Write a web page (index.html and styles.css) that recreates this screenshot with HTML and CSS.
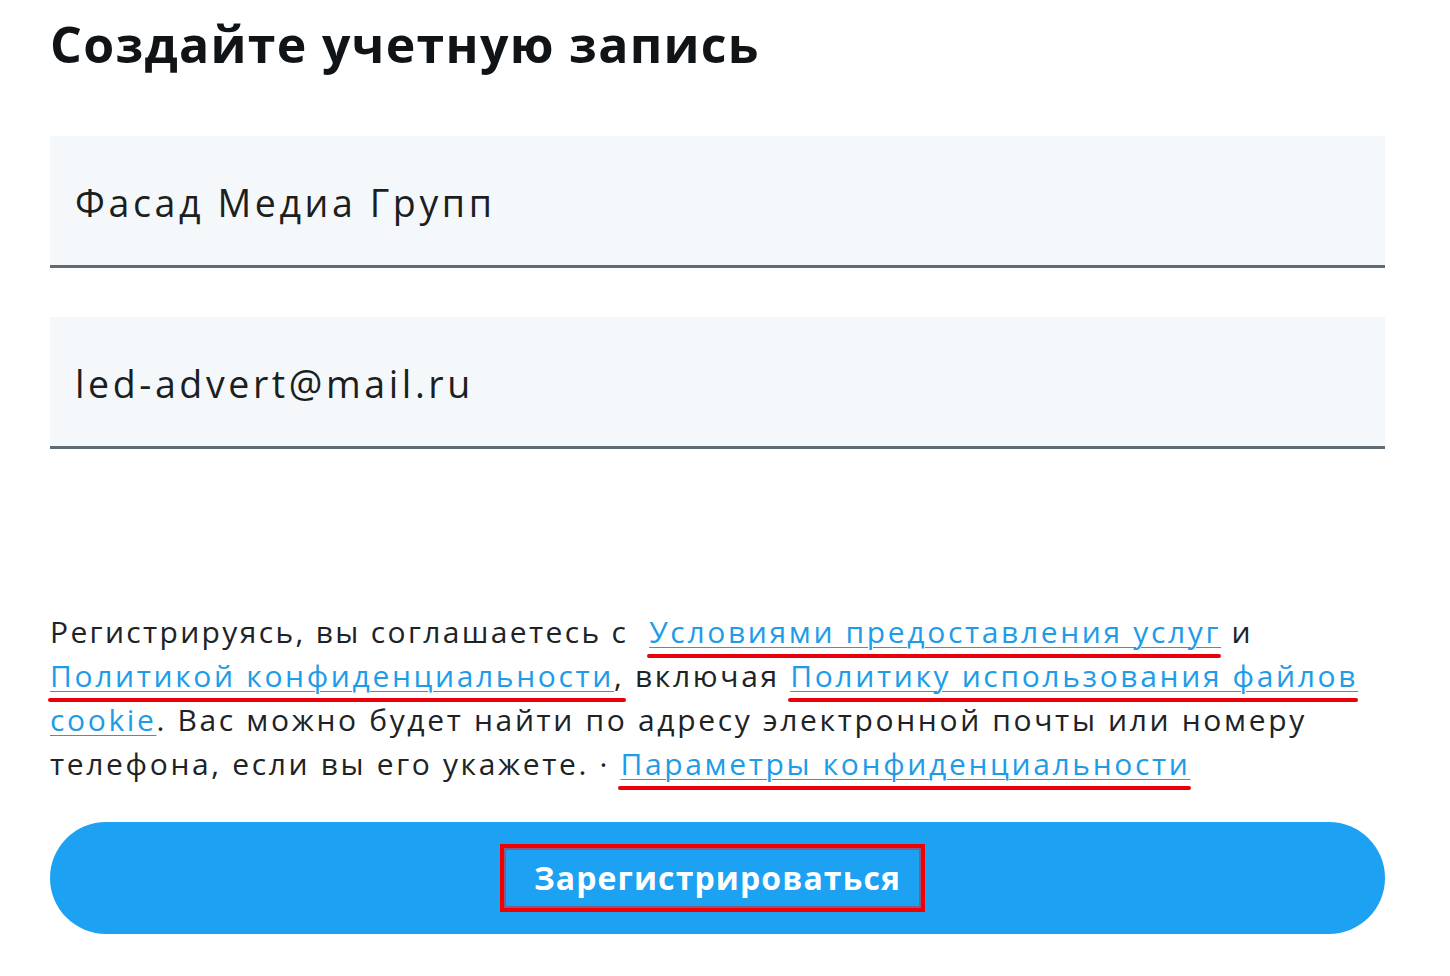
FILE: index.html
```html
<!DOCTYPE html>
<html lang="ru">
<head>
<meta charset="utf-8">
<title>Создайте учетную запись</title>
<link rel="stylesheet" href="styles.css">
</head>
<body>
<main class="signup">
  <h1 class="title">Создайте учетную запись</h1>
  <div class="field"><span class="field-value">Фасад Медиа Групп</span></div>
  <div class="field field-second"><span class="field-value">led-advert@mail.ru</span></div>
  <p class="terms"><span class="lead">Регистрируясь, вы соглашаетесь с</span>&nbsp; <a class="link marked" href="#">Условиями предоставления услуг</a> и<br><a class="link marked marked-wide" href="#">Политикой конфиденциальности</a>, включая <a class="link marked" href="#">Политику использования файлов</a><br><a class="link" href="#">cookie</a>. Вас можно будет найти по адресу электронной почты или номеру<br>телефона, если вы его укажете. · <a class="link marked" href="#">Параметры конфиденциальности</a></p>
  <button class="submit" type="button"><span class="submit-label">Зарегистрироваться</span></button>
</main>
</body>
</html>
```

FILE: styles.css
```css
html, body {
  margin: 0;
  padding: 0;
  background: #ffffff;
}

body {
  font-family: "Open Sans", "Noto Sans", "DejaVu Sans", sans-serif;
  color: #14171a;
}

.signup {
  width: 1335px;
  padding: 0 0 0 50px;
  display: flex;
  flex-direction: column;
}

.title {
  margin: 14px 0 0 0;
  font-size: 50px;
  line-height: 60px;
  font-weight: 700;
  letter-spacing: 1.3px;
  color: #111417;
  white-space: nowrap;
}

.field {
  margin-top: 62px;
  background: #f5f8fa;
  border-bottom: 3px solid #5f6b75;
  padding: 42px 25px 0 25px;
  box-sizing: border-box;
  height: 132px;
}

.field-second {
  margin-top: 49px;
}

.field-value {
  display: block;
  font-size: 37.5px;
  line-height: 50px;
  letter-spacing: 3.6px;
  color: #1c1f22;
  white-space: nowrap;
}

.terms {
  margin: 161px 0 0 0;
  font-size: 30px;
  line-height: 44px;
  letter-spacing: 2.65px;
  color: #202326;
}

.lead {
  letter-spacing: 2.35px;
}

.link {
  color: #1e9ce8;
  text-decoration: underline;
  text-decoration-thickness: 1px;
  text-underline-offset: 4px;
}

.marked {
  position: relative;
}

.marked::after {
  content: "";
  position: absolute;
  left: -2px;
  right: 0;
  bottom: -6px;
  height: 4px;
  border-radius: 2px;
  background: #e8000b;
}

.marked-wide::after {
  right: -12px;
}

.submit {
  margin-top: 36px;
  height: 112px;
  border: none;
  border-radius: 56px;
  background: #1da1f2;
  display: flex;
  align-items: center;
  justify-content: center;
  padding: 0;
  font-family: inherit;
  cursor: pointer;
}

.submit-label {
  display: inline-block;
  padding: 6px 20px 6px 30px;
  margin-right: 10px;
  border: 4px solid #f00000;
  box-shadow: inset 0 0 0 2px #8a5a86;
  font-size: 32px;
  line-height: 48px;
  font-weight: 700;
  color: #ffffff;
  letter-spacing: 1.1px;
}
```
